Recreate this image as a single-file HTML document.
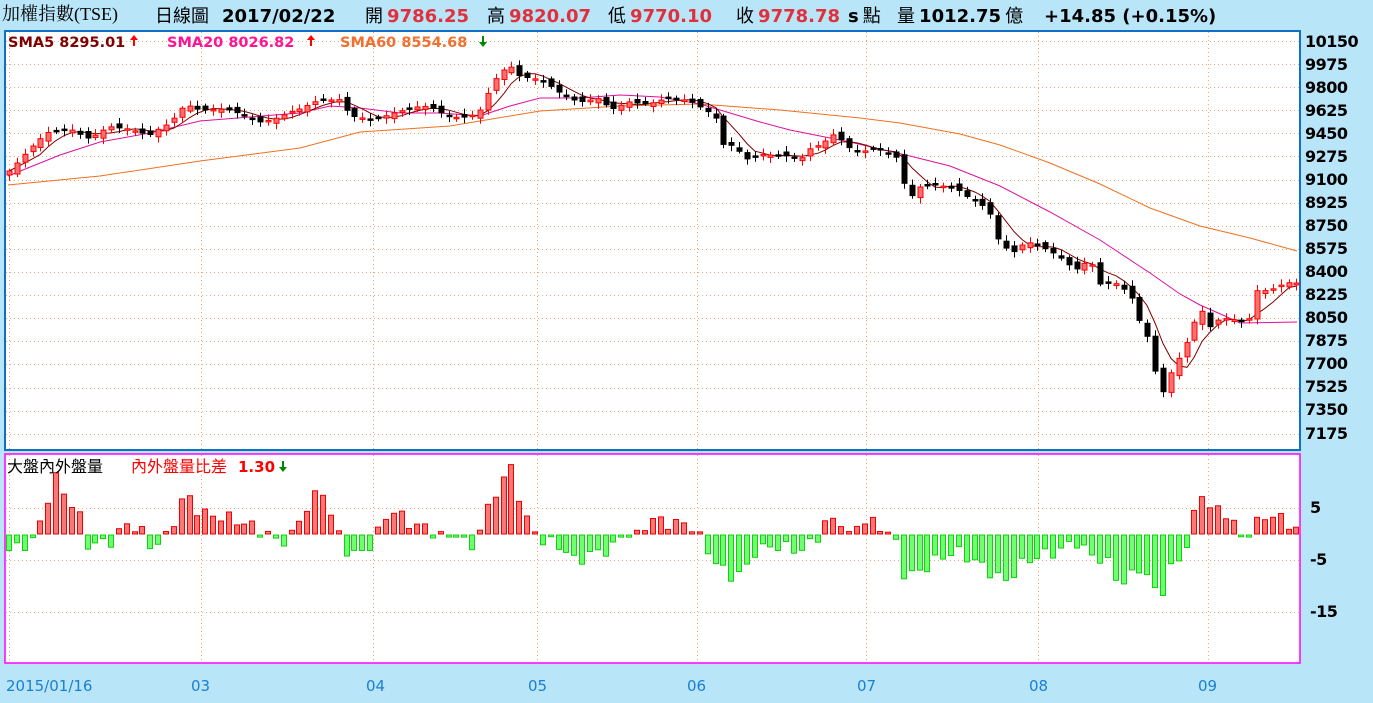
<!DOCTYPE html>
<html><head><meta charset="utf-8"><style>
body{margin:0;width:1373px;height:703px;background:#b9e5f9;overflow:hidden;font-family:"Liberation Sans","Noto Sans CJK TC",sans-serif;position:relative}
.t{position:absolute;white-space:nowrap}
.h{top:4px;font-size:18px;color:#000;font-family:"Noto Sans CJK TC",sans-serif;line-height:22px}
.h b{font-family:"DejaVu Sans",sans-serif;font-size:18px}
.r{color:#e0303c}
.ax{position:absolute;left:1305px;font-size:16px;font-weight:bold;font-family:"DejaVu Sans","Liberation Sans",sans-serif;letter-spacing:-0.5px}
.m{position:absolute;top:677px;font-size:15px;color:#1a7fd0;font-family:"DejaVu Sans",sans-serif}
</style></head><body>
<div class="t h" style="left:2px;font-family:'Liberation Serif','Noto Serif CJK TC',serif;font-size:18px;top:3px">加權指數(TSE)</div>
<div class="t h" style="left:155px">日線圖</div>
<div class="t h" style="left:222px"><b>2017/02/22</b></div>
<div class="t h" style="left:365px">開 <b class="r">9786.25</b></div>
<div class="t h" style="left:487px">高 <b class="r">9820.07</b></div>
<div class="t h" style="left:608px">低 <b class="r">9770.10</b></div>
<div class="t h" style="left:736px">收 <b class="r">9778.78</b></div>
<div class="t h" style="left:848px"><b>s</b> 點</div>
<div class="t h" style="left:897px">量 <b>1012.75</b> 億</div>
<div class="t h" style="left:1044px"><b>+14.85 (+0.15%)</b></div>

<svg width="1373" height="703" style="position:absolute;left:0;top:0" id="s">
<rect x="5" y="31" width="1295" height="419" fill="#fff" stroke="#1070c8" stroke-width="2"/>
<rect x="5" y="454" width="1295" height="209" fill="#fff" stroke="#ff00ff" stroke-width="1.5"/>
<g id="grid" stroke="#e8a878" stroke-dasharray="1,3" stroke-width="1"></g>
<polyline id="ma60" fill="none" stroke="#f07020" stroke-width="1" points="8,185 100,176 200,161 300,148 360,132 450,126 540,111 620,106 700,104 780,110 860,118 900,123 960,134 1000,145 1050,163 1100,184 1150,208 1200,226 1250,238 1297,251"/>
<polyline id="ma20" fill="none" stroke="#e0109c" stroke-width="1" points="8,176 60,155 100,142 150,133 200,121 250,117 300,113 330,106 360,108 400,113 440,113 480,116 510,106 540,98 580,98 620,95 660,97 700,104 730,113 760,122 790,130 820,136 850,142 880,149 910,156 950,166 1000,186 1050,212 1100,240 1150,273 1180,294 1200,305 1225,316 1240,323 1297,322"/>
<polyline id="ma5" fill="none" stroke="#800000" stroke-width="1"/>
<g id="cand"></g>
<g id="vol"></g>
<text x="8" y="47" font-size="14.5" font-weight="bold" fill="#800000" font-family="DejaVu Sans">SMA5 8295.01</text>
<text x="167" y="47" font-size="14.5" font-weight="bold" fill="#ff1493" font-family="DejaVu Sans">SMA20 8026.82</text>
<text x="340" y="47" font-size="14.5" font-weight="bold" fill="#f07030" font-family="DejaVu Sans">SMA60 8554.68</text>
<path d="M134 35 l-4 5 h3 v6 h2 v-6 h3z" fill="#f00"/>
<path d="M311 35 l-4 5 h3 v6 h2 v-6 h3z" fill="#f00"/>
<path d="M483 47 l-4 -5 h3 v-6 h2 v6 h3z" fill="#080"/>
<text x="7" y="472" font-size="16" fill="#000" font-family="Noto Sans CJK TC,sans-serif">大盤內外盤量</text>
<text x="131" y="472" font-size="16" fill="#f00" font-family="Noto Sans CJK TC,sans-serif">內外盤量比差</text>
<text x="238" y="472" font-size="15" fill="#f00" font-weight="bold" font-family="DejaVu Sans">1.30</text>
<path d="M283 472 l-4 -5 h3 v-6 h2 v6 h3z" fill="#080"/>
</svg>
<div class="ax" style="top:32px">10150</div><div class="ax" style="top:55px">9975</div><div class="ax" style="top:78px">9800</div><div class="ax" style="top:101px">9625</div><div class="ax" style="top:124px">9450</div><div class="ax" style="top:147px">9275</div><div class="ax" style="top:170px">9100</div><div class="ax" style="top:193px">8925</div><div class="ax" style="top:216px">8750</div><div class="ax" style="top:239px">8575</div><div class="ax" style="top:262px">8400</div><div class="ax" style="top:285px">8225</div><div class="ax" style="top:308px">8050</div><div class="ax" style="top:331px">7875</div><div class="ax" style="top:354px">7700</div><div class="ax" style="top:377px">7525</div><div class="ax" style="top:400px">7350</div><div class="ax" style="top:424px">7175</div>
<div class="ax" style="top:498px;left:1310px">5</div><div class="ax" style="top:550px;left:1310px">-5</div><div class="ax" style="top:602px;left:1310px">-15</div>
<div class="m" style="left:6px">2015/01/16</div><div class="m" style="left:191px">03</div><div class="m" style="left:366px">04</div><div class="m" style="left:528px">05</div><div class="m" style="left:687px">06</div><div class="m" style="left:857px">07</div><div class="m" style="left:1029px">08</div><div class="m" style="left:1198px">09</div>
<script>
(function(){
var NS="http://www.w3.org/2000/svg";
function el(g,t,a){var e=document.createElementNS(NS,t);for(var k in a)e.setAttribute(k,a[k]);document.getElementById(g).appendChild(e);return e;}
var gx=[9,201,373,537,697,866,1038,1208];
for(var y=41;y<440;y+=23.1)el('grid','line',{x1:6,x2:1299,y1:Math.round(y)+.5,y2:Math.round(y)+.5});
[508,560,612].forEach(function(y){el('grid','line',{x1:6,x2:1299,y1:y+.5,y2:y+.5});});
gx.forEach(function(x){el('grid','line',{x1:x+.5,x2:x+.5,y1:32,y2:449});el('grid','line',{x1:x+.5,x2:x+.5,y1:455,y2:662});});
var kp=[[8,170],[30,150],[50,132],[70,127],[90,140],[110,128],[130,127],[150,135],[170,125],[185,103],[200,108],[230,112],[260,120],[280,118],[300,110],[320,97],[340,100],[350,118],[370,120],[390,112],[410,110],[430,107],[450,115],[470,118],[480,112],[490,90],[500,70],[512,65],[520,75],[540,82],[560,93],[580,100],[600,100],[610,112],[630,100],[650,103],[670,100],[690,100],[700,105],[715,115],[720,145],[735,148],[745,160],[760,152],[780,155],[800,162],[808,150],[820,143],[835,132],[850,150],[860,155],[875,147],[890,152],[900,158],[905,190],[915,200],[920,188],[935,185],[955,185],[965,195],[980,205],[990,215],[1000,245],[1015,250],[1025,240],[1040,248],[1060,258],[1075,268],[1090,258],[1100,285],[1115,285],[1130,293],[1140,320],[1150,340],[1160,400],[1168,380],[1176,365],[1184,350],[1192,328],[1200,305],[1210,325],[1220,318],[1235,322],[1248,325],[1256,290],[1270,288],[1285,283],[1297,285]];
function interp(k,x){for(var i=1;i<k.length;i++){if(x<=k[i][0]){var a=k[i-1],b=k[i];return a[1]+(b[1]-a[1])*(x-a[0])/(b[0]-a[0]);}}return k[k.length-1][1];}
var xs=[],cs=[];for(var x=9;x<=1297;x+=7.85){xs.push(x);cs.push(interp(kp,x)+Math.sin(x*0.9)*2);}
var ma=[];
for(var i=0;i<xs.length;i++){var c=cs[i],o=i?cs[i-1]+Math.sin(i*1.7)*3:c+4;var up=c<o;var x0=Math.round(xs[i]);
var tp=Math.min(o,c),bt=Math.max(o,c);if(bt-tp<1.5){bt=tp+1.5;}
var col=up?'#f00':'#000';
el('cand','line',{x1:x0+.5,x2:x0+.5,y1:(tp-2-Math.abs(Math.sin(i))*4).toFixed(1),y2:(bt+2+Math.abs(Math.cos(i*1.3))*4).toFixed(1),stroke:col});
el('cand','rect',{x:x0-2,y:tp.toFixed(1),width:5,height:(bt-tp).toFixed(1),fill:up?'#f87070':'#000',stroke:col,'stroke-width':1});
var s=0,n=0;for(var j=Math.max(0,i-4);j<=i;j++){s+=cs[j];n++;}ma.push(Math.round(xs[i])+','+(s/n).toFixed(1));}
document.getElementById('ma5').setAttribute('points',ma.join(' '));
var vk=[[9,-3],[35,-1],[40,2],[55,11],[80,3],[88,-2],[115,-1],[125,2],[140,1],[150,-2],[165,-1],[175,3],[185,8],[200,4],[230,3],[260,1],[275,-1],[290,-1],[300,3],[322,9],[335,1],[350,-4],[365,-3],[375,-1],[390,5],[410,2],[430,1],[445,-1],[455,1],[470,-3],[480,1],[495,8],[512,13],[525,3],[540,-1],[560,-2],[575,-5],[600,-3],[612,-3],[620,0],[625,1],[635,-1],[650,3],[670,2],[690,2],[700,-1],[715,-5],[728,-8],[745,-7],[755,-3],[775,-2],[800,-3],[815,-1],[825,2],[840,3],[850,-1],[860,3],[885,1],[895,-1],[905,-8],[920,-7],[935,-5],[955,-3],[975,-5],[990,-7],[1005,-9],[1025,-5],[1040,-4],[1060,-3],[1075,-1],[1085,-3],[1095,-4],[1112,-6],[1120,-10],[1140,-6],[1160,-12],[1172,-6],[1182,-4],[1192,1],[1200,9],[1210,5],[1228,4],[1236,1],[1243,-1],[1250,1],[1270,4],[1297,1]];
for(var i=0;i<xs.length;i++){var v=interp(vk,xs[i])+Math.sin(i*2.3)*1.2;if(Math.abs(v)<0.3)v=v<0?-0.4:0.4;var x0=Math.round(xs[i]);var h=v*5.2;var pos=v>0;
el('vol','rect',{x:x0-2.5,y:(pos?534-h:535).toFixed(1),width:5,height:Math.abs(h).toFixed(1),fill:pos?'#f87878':'#70ff70',stroke:pos?'#e00':'#10d010','stroke-width':1});}
})();
</script>
</body></html>
